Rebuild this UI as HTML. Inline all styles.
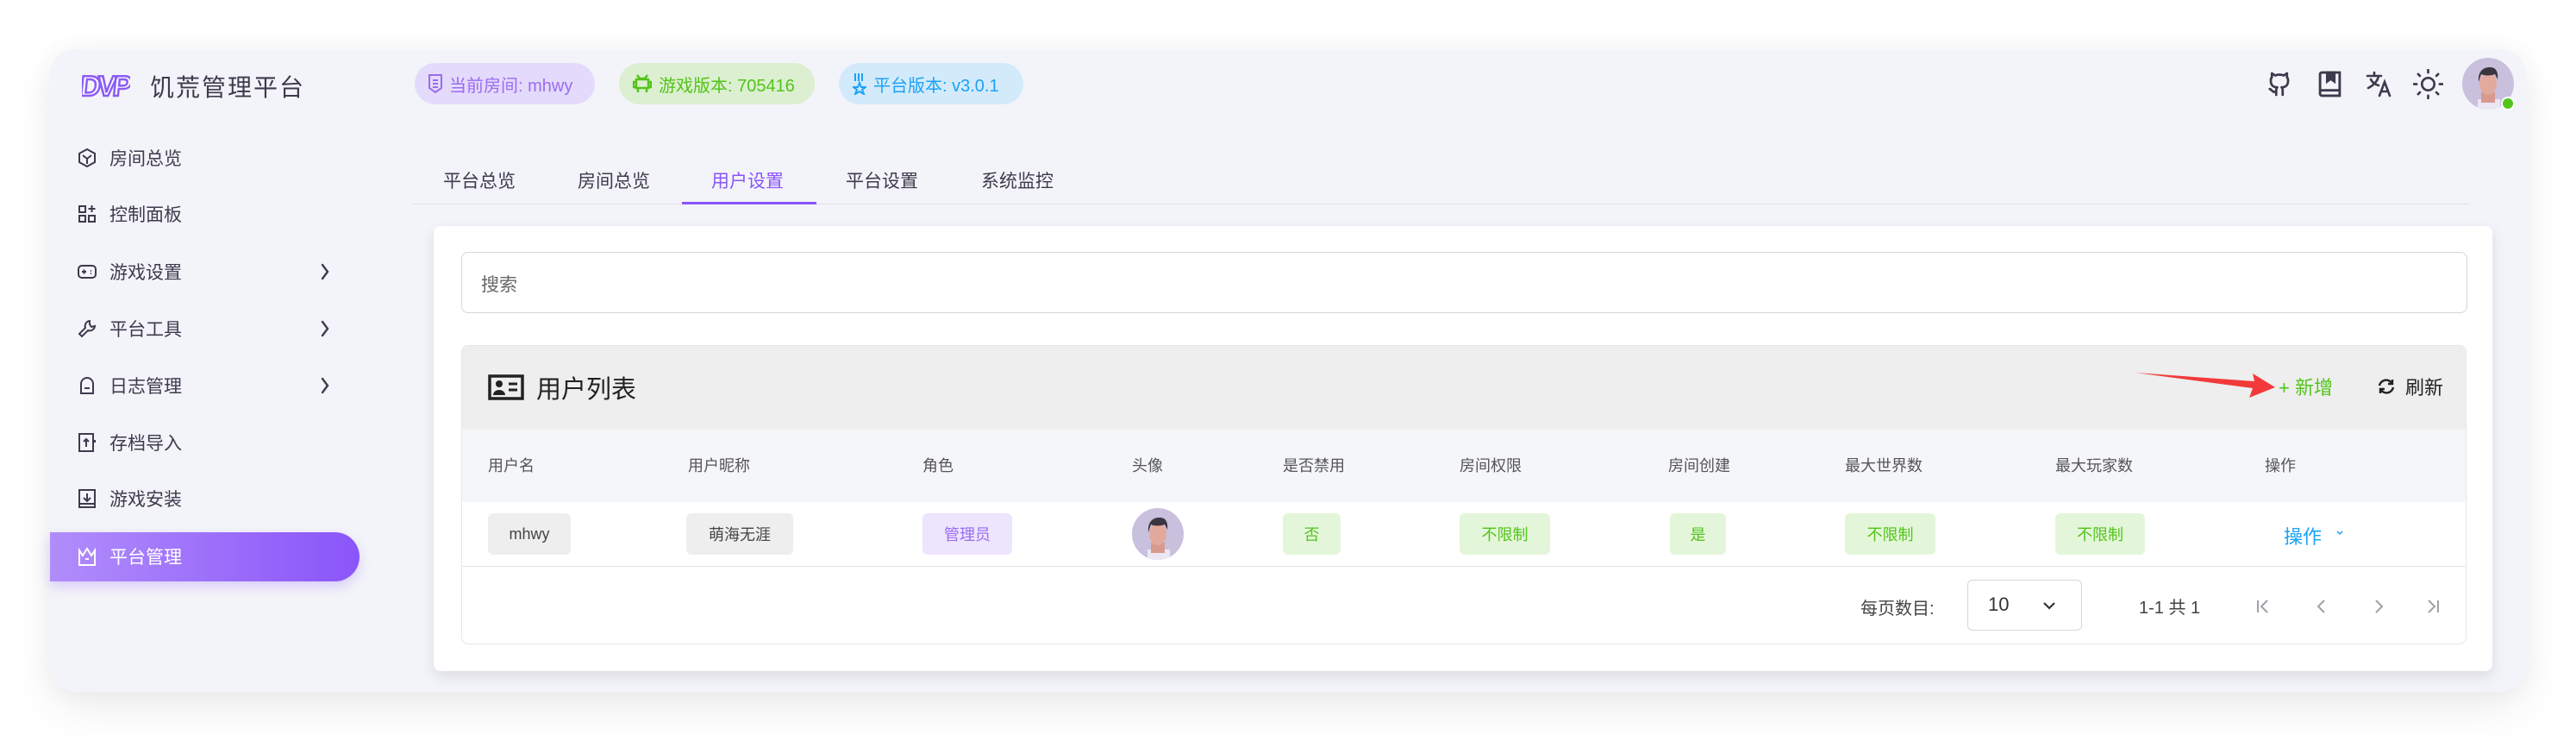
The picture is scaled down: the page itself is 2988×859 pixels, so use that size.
<!DOCTYPE html>
<html><head><meta charset="utf-8"><style>
*{box-sizing:border-box;margin:0;padding:0}
body{width:2988px;height:859px;background:#fff;position:relative;overflow:hidden;font-family:"Liberation Sans","Noto Sans CJK SC",sans-serif;color:#3e3a4d}
.a{position:absolute}
.win{left:58px;top:57px;width:2872px;height:745px;background:#f3f4f9;border-radius:30px;box-shadow:0 20px 50px rgba(0,0,0,0.07),0 0 30px rgba(0,0,0,0.04)}
.chip{height:48px;border-radius:24px;font-size:20px;display:flex;align-items:center;padding-left:16px;gap:8px}
.nav{left:90px;font-size:21px;display:flex;align-items:center;height:30px;color:#3e3a4d}
.nav svg{width:22px;height:22px;margin-right:15px}
.chev{left:371px}
.tab{top:194px;font-size:21px;color:#3e3a4d}
.th{top:526px;font-size:18px;color:#555}
.tag{top:595px;height:48px;border-radius:6px;display:flex;align-items:center;justify-content:center;font-size:18px}
.g{background:#eeeeee;color:#444}
.gr{background:#e4f6d9;color:#52c41a}
</style></head><body>
<div class="a win"></div>
<!-- logo -->
<svg class="a" style="left:95px;top:83px" width="56" height="32" viewBox="0 0 56 32"><text x="0" y="28" font-family="Liberation Sans" font-weight="bold" font-size="33" fill="#fff" stroke="#8b5cf6" stroke-width="2.5" letter-spacing="-4" transform="skewX(-6)">DVP</text></svg>
<div class="a" style="left:174px;top:80px;font-size:28px;letter-spacing:2px;color:#3e3a4d">饥荒管理平台</div>
<!-- chips -->
<div class="a chip" style="left:481px;top:73px;width:209px;background:#e4dafc;color:#9a6cf0"><svg width="16" height="22" viewBox="0 0 16 22"><path d="M1 1h14v15l-7 5-7-5z M5 7h6 M5 11h6 M5 15h6" fill="none" stroke="#9a6cf0" stroke-width="2"/></svg>当前房间: mhwy</div>
<div class="a chip" style="left:718px;top:73px;width:227px;background:#dcefd0;color:#52c41a"><svg width="22" height="22" viewBox="0 0 22 22"><path d="M5 1l3 4h6l3-4M4 6h14v10H4zM1 9h3v6H1zM18 9h3v6h-3zM6 16v5M16 16v5" fill="none" stroke="#52c41a" stroke-width="2.5"/><rect x="7" y="9" width="3" height="3" fill="#dcefd0"/><rect x="12" y="9" width="3" height="3" fill="#dcefd0"/></svg>游戏版本: 705416</div>
<div class="a chip" style="left:973px;top:73px;width:214px;background:#d3eafb;color:#1aa3f5"><svg width="16" height="26" viewBox="0 0 16 26"><path d="M3 1v9M7 1v9M11 1v9M8 12l2 5h5l-4 3 2 5-5-3-5 3 2-5-4-3h5z" fill="none" stroke="#1aa3f5" stroke-width="2"/></svg>平台版本: v3.0.1</div>
<!-- top-right icons -->
<svg class="a" style="left:2629px;top:82px" width="30" height="31" viewBox="0 0 24 24" fill="none" stroke="#3e3a4d" stroke-width="2.2" stroke-linecap="round" stroke-linejoin="round"><path d="M9 22v-4a4 4 0 0 1 1-3c-3 0-6-1.5-6-6a5 5 0 0 1 1-3.5V2l3 2a11 11 0 0 1 8 0l3-2v3.5A5 5 0 0 1 20 9c0 4.5-3 6-6 6a4 4 0 0 1 1 3v4M9 19c-4 1-4-2-6-2.5"/></svg>
<svg class="a" style="left:2688px;top:82px" width="29" height="31" viewBox="0 0 28 30" fill="none" stroke="#3e3a4d" stroke-width="2.8"><path d="M3 4a2 2 0 0 1 2-2h20v26H5a2 2 0 0 1-2-2z M3 22h22"/><path d="M11 2h8v10l-4-3-4 3z" fill="#3e3a4d"/></svg>
<svg class="a" style="left:2744px;top:82px" width="32" height="31" viewBox="0 0 32 31" fill="none" stroke="#3e3a4d" stroke-width="2.6" stroke-linecap="round"><path d="M2 6h16M10 2v4M15 6c-1 6-6 11-12 14M6 10c2 4 5 6 9 7M16 29l6-16 6 16M18 24h8"/></svg>
<svg class="a" style="left:2799px;top:80px" width="35" height="35" viewBox="0 0 34 34" fill="none" stroke="#3e3a4d" stroke-width="2.6" stroke-linecap="round"><circle cx="17" cy="17" r="7"/><path d="M17 1v3M17 30v3M1 17h3M30 17h3M5.7 5.7l2 2M26.3 26.3l2 2M5.7 28.3l2-2M26.3 7.7l2-2"/></svg>
<svg class="a" style="left:2856px;top:67px" width="64" height="64" viewBox="0 0 64 64"><defs><clipPath id="c1"><circle cx="30" cy="30" r="30"/></clipPath></defs><circle cx="30" cy="30" r="30" fill="#c9c0dd"/><g clip-path="url(#c1)"><rect x="18" y="48" width="26" height="14" fill="#eae6f3"/><path d="M22 40h16v12H22z" fill="#d89a8e"/><ellipse cx="30" cy="30" rx="10" ry="13" fill="#e2aa9c"/><path d="M19 28c-1-12 5-17 13-17 7 0 10 5 9 14l-3-6c-5 2-12 2-16 0z" fill="#3a3640"/></g><circle cx="53" cy="53" r="8" fill="#fff"/><circle cx="53" cy="53" r="6" fill="#52c41a"/></svg>
<!-- sidebar -->
<div class="a nav" style="top:168px"><svg viewBox="0 0 22 22" fill="none" stroke="#3e3a4d" stroke-width="2"><path d="M11 1l9 5v10l-9 5-9-5V6z M6 8l5 4 5-4 M11 12v6"/></svg>房间总览</div>
<div class="a nav" style="top:233px"><svg viewBox="0 0 22 22" fill="none" stroke="#3e3a4d" stroke-width="2"><rect x="2" y="2" width="7" height="7"/><rect x="2" y="13" width="7" height="7"/><rect x="13" y="13" width="7" height="7"/><path d="M16.5 1v8M12.5 5h8"/></svg>控制面板</div>
<div class="a nav" style="top:300px"><svg viewBox="0 0 22 22" fill="none" stroke="#3e3a4d" stroke-width="2"><rect x="1" y="4" width="20" height="14" rx="4"/><path d="M5 11h5M7.5 8.5v5M15 10h1M15 13h1"/></svg>游戏设置</div>
<svg class="a chev" style="top:304px" width="12" height="22" viewBox="0 0 12 22" fill="none" stroke="#3e3a4d" stroke-width="2.4" stroke-linecap="round"><path d="M3 3l6 8-6 8"/></svg>
<div class="a nav" style="top:366px"><svg viewBox="0 0 22 22" fill="none" stroke="#3e3a4d" stroke-width="2"><path d="M14 2a6 6 0 0 0-5 8l-7 7 3 3 7-7a6 6 0 0 0 8-5l-4 1-2-3z"/></svg>平台工具</div>
<svg class="a chev" style="top:370px" width="12" height="22" viewBox="0 0 12 22" fill="none" stroke="#3e3a4d" stroke-width="2.4" stroke-linecap="round"><path d="M3 3l6 8-6 8"/></svg>
<div class="a nav" style="top:432px"><svg viewBox="0 0 22 22" fill="none" stroke="#3e3a4d" stroke-width="2"><path d="M4 20V9a7 7 0 0 1 14 0v11z M8 14h6"/></svg>日志管理</div>
<svg class="a chev" style="top:436px" width="12" height="22" viewBox="0 0 12 22" fill="none" stroke="#3e3a4d" stroke-width="2.4" stroke-linecap="round"><path d="M3 3l6 8-6 8"/></svg>
<div class="a nav" style="top:498px"><svg viewBox="0 0 22 22" fill="none" stroke="#3e3a4d" stroke-width="2"><rect x="2" y="1" width="16" height="20"/><path d="M10 16V7M7 10l3-3 3 3M20 8v3"/></svg>存档导入</div>
<div class="a nav" style="top:563px"><svg viewBox="0 0 22 22" fill="none" stroke="#3e3a4d" stroke-width="2"><rect x="2" y="1" width="18" height="20"/><path d="M11 5v9M7 10l4 4 4-4M2 17h18"/></svg>游戏安装</div>
<div class="a" style="left:58px;top:617px;width:359px;height:57px;border-radius:0 29px 29px 0;background:linear-gradient(90deg,#b18dfb,#8a55fa);box-shadow:0 6px 14px rgba(138,85,250,0.25)"></div>
<div class="a nav" style="top:630px;color:#fff"><svg viewBox="0 0 22 22" fill="none" stroke="#fff" stroke-width="2"><path d="M2 4l4 6 5-8 5 8 4-6v17H2z M9 14h4"/></svg>平台管理</div>
<!-- tabs -->
<div class="a tab" style="left:514px">平台总览</div>
<div class="a tab" style="left:670px">房间总览</div>
<div class="a tab" style="left:825px;color:#8a55fa">用户设置</div>
<div class="a tab" style="left:981px">平台设置</div>
<div class="a tab" style="left:1138px">系统监控</div>
<div class="a" style="left:479px;top:236px;width:2385px;height:1px;background:#dfdfe4"></div>
<div class="a" style="left:791px;top:234px;width:156px;height:3px;background:#8a55fa"></div>
<!-- card -->
<div class="a" style="left:503px;top:262px;width:2388px;height:516px;background:#fff;border-radius:8px;box-shadow:0 6px 16px rgba(0,0,0,0.1)"></div>
<div class="a" style="left:535px;top:292px;width:2327px;height:71px;border:1.5px solid #d6d6da;border-radius:8px"></div>
<div class="a" style="left:558px;top:314px;font-size:21px;color:#666">搜索</div>
<div class="a" style="left:535px;top:400px;width:2326px;height:347px;border:1.5px solid #e6e6ea;border-radius:8px;overflow:hidden;background:#fff">
 <div style="height:97px;background:#eeeeee"></div>
 <div style="height:84px;background:#f5f6fa"></div>
 <div style="height:75px;border-bottom:1.5px solid #e4e4e8"></div>
</div>
<svg class="a" style="left:566px;top:434px" width="42" height="30" viewBox="0 0 42 30"><rect x="2" y="2" width="38" height="26" fill="none" stroke="#222" stroke-width="3.5"/><circle cx="13" cy="11" r="4" fill="#222"/><path d="M6 24a7 6 0 0 1 14 0z" fill="#222"/><path d="M24 11h10M24 18h10" stroke="#222" stroke-width="3"/></svg>
<div class="a" style="left:622px;top:428px;font-size:29px;color:#222">用户列表</div>
<svg class="a" style="left:2475px;top:428px" width="168" height="34" viewBox="0 0 168 34"><path d="M2 4l138 10-2-9 26 16-30 12 4-11z" fill="#f23a3a"/></svg>
<div class="a" style="left:2643px;top:432px;font-size:22px;color:#52c41a">+ 新增</div>
<svg class="a" style="left:2757px;top:437px" width="22" height="22" viewBox="0 0 22 22" fill="none" stroke="#222" stroke-width="2.4"><path d="M18 8a8 8 0 0 0-15 2M4 14a8 8 0 0 0 15-2M18 3v5h-5M4 19v-5h5"/></svg>
<div class="a" style="left:2790px;top:432px;font-size:22px;color:#222">刷新</div>
<div class="a th" style="left:566px">用户名</div>
<div class="a th" style="left:798px">用户昵称</div>
<div class="a th" style="left:1070px">角色</div>
<div class="a th" style="left:1313px">头像</div>
<div class="a th" style="left:1488px">是否禁用</div>
<div class="a th" style="left:1693px">房间权限</div>
<div class="a th" style="left:1935px">房间创建</div>
<div class="a th" style="left:2140px">最大世界数</div>
<div class="a th" style="left:2384px">最大玩家数</div>
<div class="a th" style="left:2627px">操作</div>
<div class="a tag g" style="left:566px;width:96px">mhwy</div>
<div class="a tag g" style="left:796px;width:124px">萌海无涯</div>
<div class="a tag" style="left:1070px;width:104px;background:#ede4fe;color:#9a6cf0">管理员</div>
<svg class="a" style="left:1313px;top:589px" width="60" height="60" viewBox="0 0 60 60"><defs><clipPath id="c2"><circle cx="30" cy="30" r="30"/></clipPath></defs><circle cx="30" cy="30" r="30" fill="#c9c0dd"/><g clip-path="url(#c2)"><rect x="18" y="48" width="26" height="14" fill="#eae6f3"/><path d="M22 40h16v12H22z" fill="#d89a8e"/><ellipse cx="30" cy="30" rx="10" ry="13" fill="#e2aa9c"/><path d="M19 28c-1-12 5-17 13-17 7 0 10 5 9 14l-3-6c-5 2-12 2-16 0z" fill="#3a3640"/></g></svg>
<div class="a tag gr" style="left:1488px;width:67px">否</div>
<div class="a tag gr" style="left:1693px;width:105px">不限制</div>
<div class="a tag gr" style="left:1937px;width:65px">是</div>
<div class="a tag gr" style="left:2140px;width:105px">不限制</div>
<div class="a tag gr" style="left:2384px;width:104px">不限制</div>
<div class="a" style="left:2649px;top:605px;font-size:22px;color:#1aa3f5">操作</div>
<svg class="a" style="left:2710px;top:615px" width="8" height="6" viewBox="0 0 8 6" fill="none" stroke="#1aa3f5" stroke-width="1.5"><path d="M1 1l3 3 3-3"/></svg>
<div class="a" style="left:2158px;top:689px;font-size:20px;color:#444">每页数目:</div>
<div class="a" style="left:2282px;top:672px;width:133px;height:59px;border:1.5px solid #d6d6da;border-radius:6px"></div>
<div class="a" style="left:2306px;top:688px;font-size:22px;color:#333">10</div>
<svg class="a" style="left:2369px;top:697px" width="16" height="10" viewBox="0 0 16 10" fill="none" stroke="#333" stroke-width="2.2"><path d="M2 2l6 6 6-6"/></svg>
<div class="a" style="left:2481px;top:688px;font-size:20px;color:#444">1-1 共 1</div>
<svg class="a" style="left:2616px;top:692px" width="220" height="22" viewBox="0 0 220 22" fill="none" stroke="#a0a0a8" stroke-width="2"><path d="M3 4v14M14 4l-7 7 7 7M80 4l-7 7 7 7M140 4l7 7-7 7M201 4l7 7-7 7M212 4v14"/></svg>
</body></html>
